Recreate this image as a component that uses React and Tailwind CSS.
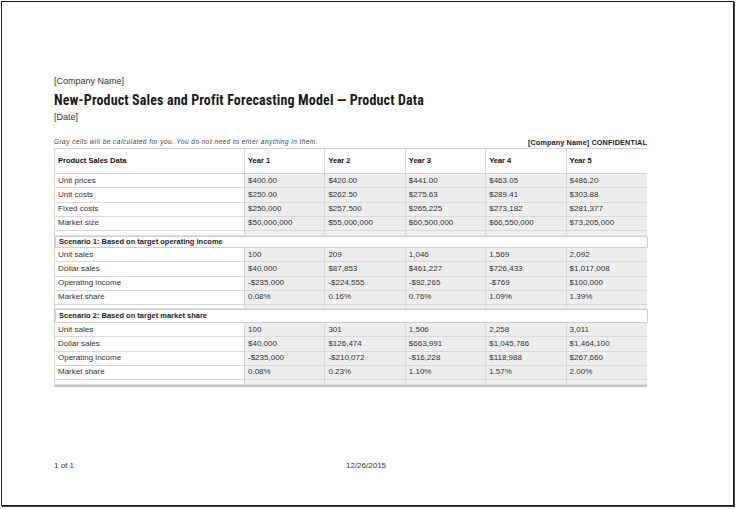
const YEARS = ['Year 1', 'Year 2', 'Year 3', 'Year 4', 'Year 5'];

const BASE = [
  ['Unit prices', '$400.00', '$420.00', '$441.00', '$463.05', '$486.20'],
  ['Unit costs', '$250.00', '$262.50', '$275.63', '$289.41', '$303.88'],
  ['Fixed costs', '$250,000', '$257,500', '$265,225', '$273,182', '$281,377'],
  ['Market size', '$50,000,000', '$55,000,000', '$60,500,000', '$66,550,000', '$73,205,000'],
];

const SCENARIO_1 = [
  ['Unit sales', '100', '209', '1,046', '1,569', '2,092'],
  ['Dollar sales', '$40,000', '$87,853', '$461,227', '$726,433', '$1,017,008'],
  ['Operating income', '-$235,000', '-$224,555', '-$92,265', '-$769', '$100,000'],
  ['Market share', '0.08%', '0.16%', '0.76%', '1.09%', '1.39%'],
];

const SCENARIO_2 = [
  ['Unit sales', '100', '301', '1,506', '2,258', '3,011'],
  ['Dollar sales', '$40,000', '$126,474', '$663,991', '$1,045,786', '$1,464,100'],
  ['Operating income', '-$235,000', '-$210,072', '-$16,228', '$118,988', '$267,660'],
  ['Market share', '0.08%', '0.23%', '1.10%', '1.57%', '2.00%'],
];

const COLS = 'grid grid-cols-[190px_repeat(5,minmax(0,1fr))]';

function DataRow({ cells }) {
  return (
    <div className={`${COLS} h-[14.25px] border-b border-[#d9d9d9]`}>
      {cells.map((c, i) => (
        <div
          key={i}
          className={`flex items-center pl-[3px] text-[8px] leading-none text-[#333] ${i > 0 ? 'bg-[#eeeeee]' : 'bg-white'} ${i < 5 ? 'border-r border-[#d9d9d9]' : ''}`}
        >
          {c}
        </div>
      ))}
    </div>
  );
}

function Spacer({ h }) {
  return (
    <div className={`${COLS} ${h} border-b border-[#e2e2e2]`}>
      {[0, 1, 2, 3, 4, 5].map(i => (
        <div key={i} className={`${i > 0 ? 'bg-[#f0f0f0]' : 'bg-white'} ${i < 5 ? 'border-r border-[#d9d9d9]' : ''}`} />
      ))}
    </div>
  );
}

function ScenarioRow({ label, h }) {
  return (
    <div className={`${h} flex items-center pl-[3px] bg-white border border-[#cfcfcf] rounded-[1px] -mr-[1px] text-[7.5px] font-bold leading-none text-[#222]`}>
      {label}
    </div>
  );
}

export default function App() {
  return (
    <div className="w-[736px] h-[509px] bg-white font-['Liberation_Sans',Arial,sans-serif]">
      <div className="ml-[1px] mt-[1px] w-[733px] h-[505px] border border-[#1a1a1a] shadow-[1px_1px_0_#444] bg-white pl-[52px] pt-[73px]">
        <div className="text-[9px] leading-[12px] text-[#333]">[Company Name]</div>
        <h1 className="mt-[5px] h-[16px] leading-[16px] text-[14px] font-bold text-[#1a1a1a] font-['Liberation_Sans_Narrow','Roboto_Condensed','DejaVu_Sans_Condensed',sans-serif] tracking-[0.15px]">
          New-Product Sales and Profit Forecasting Model — Product Data
        </h1>
        <div className="mt-[3px] text-[9px] leading-[12px] text-[#333]">[Date]</div>

        <div className="mt-[14px] w-[593px] h-[11px] flex items-center justify-between">
          <span className="text-[6.5px] italic tracking-[0.45px] text-[#444] leading-none">
            Gray cells will be calculated for you. You do not need to enter anything in them.
          </span>
          <span className="text-[7.3px] font-bold text-[#222] leading-none tracking-[0.1px]">[Company Name] CONFIDENTIAL</span>
        </div>

        <div className="w-[593px] border-l border-t border-[#d4d4d4] border-b-2 border-b-[#c4c4c4]">
          <div className={`${COLS} h-[25px] border-b border-[#d4d4d4]`}>
            <div className="flex items-center pl-[3px] text-[7.5px] font-bold text-[#111] border-r border-[#d9d9d9]">Product Sales Data</div>
            {YEARS.map((y, i) => (
              <div key={y} className={`flex items-center pl-[3px] text-[7.5px] font-bold text-[#111] ${i < 4 ? 'border-r border-[#d9d9d9]' : ''}`}>
                {y}
              </div>
            ))}
          </div>

          {BASE.map(r => <DataRow key={r[0]} cells={r} />)}
          <Spacer h="h-[5px]" />
          <ScenarioRow label="Scenario 1: Based on target operating income" h="h-[12px]" />
          {SCENARIO_1.map(r => <DataRow key={r[0]} cells={r} />)}
          <Spacer h="h-[4px]" />
          <ScenarioRow label="Scenario 2: Based on target market share" h="h-[14px]" />
          {SCENARIO_2.map(r => <DataRow key={r[0]} cells={r} />)}
          <Spacer h="h-[5px]" />
        </div>

        <div className="mt-[74px] flex text-[8px] leading-[10px] text-[#333]">
          <span className="w-[292px]">1 of 1</span>
          <span>12/26/2015</span>
        </div>
      </div>
    </div>
  );
}
